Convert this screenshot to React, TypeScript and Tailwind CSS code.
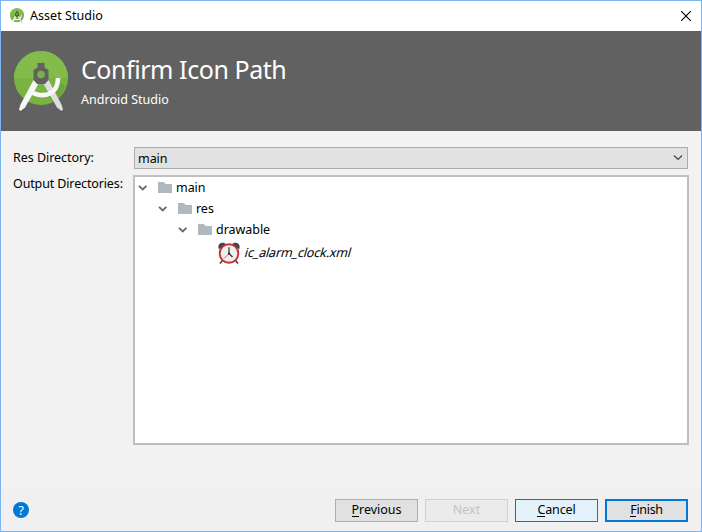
import type { ReactNode } from 'react';

function StudioLogo({ className, gear }: { className: string; gear: string }) {
  return (
    <svg viewBox="0 0 54 60" className={className}>
      <circle cx="27" cy="27" r="27" fill="#7ab342" />
      <path d="M0 27a27 27 0 0 1 54 0z" fill="#83bc4b" />
      <path d="M33 17 51 35.500A27 27 0 0 1 39 51L31 42 45 30z" fill="#639b36" opacity=".6" />
      <path d="M19.500 29 6.500 53.500 5 58.500 6.500 60 11 56.500 25 32z" fill="#f7f7f7" />
      <path d="M34.500 29 47.500 53.500 49 58.500 47.500 60 43 56.500 29 32z" fill="#dedede" />
      <path d="M16 40.500C31 48.500 44 42.500 44 27" fill="none" stroke="#f7f7f7" strokeWidth="4.600" />
      <path d="M23.500 12h7v4.500L34.500 19v10L31 33h-8l-3.500-4V19l4-2.500z" fill={gear} />
      <circle cx="27" cy="23.500" r="3.800" fill="#7ab342" />
    </svg>
  );
}

function Chevron() {
  return (
    <svg viewBox="0 0 10 6" className="h-[6px] w-[10px] shrink-0">
      <path d="M1 .8 4.700 4.500 8.400 .8" fill="none" stroke="#6b6b6b" strokeWidth="1.900" />
    </svg>
  );
}

function Folder() {
  return (
    <svg viewBox="0 0 14 11" className="ml-[10px] h-[11px] w-[14px] shrink-0">
      <path d="M0 0h5.500L8 2h6v9H0z" fill="#afb9bf" />
    </svg>
  );
}

function AlarmClock() {
  return (
    <svg viewBox="0 0 24 24" className="h-6 w-6 shrink-0">
      <path d="m5.500 19.500-2.500 3M18.500 19.500l2.500 3" stroke="#37474f" strokeWidth="1.600" />
      <path d="M1.800 8.200C.7 5.500 1.600 3 3.900 2.100 6 1.300 8 2 9 3.500zM22.200 8.200c1.100-2.700.2-5.200-2.100-6.100C18 1.300 16 2 15 3.500z" fill="#37474f" />
      <circle cx="12" cy="12.500" r="9.300" fill="#eceff1" stroke="#c93030" strokeWidth="1.900" />
      <path d="M12 6.300v6.200l3.500 3.500" fill="none" stroke="#222" strokeWidth="1.100" />
      <path d="m12 12.500-5 5" stroke="#d84343" strokeWidth=".8" />
      <circle cx="12" cy="12.500" r="1" fill="#111" />
    </svg>
  );
}

function FolderRow({ indent, label }: { indent: string; label: ReactNode }) {
  return (
    <div className={`flex h-[21px] items-center ${indent}`}>
      <Chevron />
      <Folder />
      <span className="ml-1">{label}</span>
    </div>
  );
}

function DialogButton({ look, children }: { look: string; children: ReactNode }) {
  return (
    <button className={`flex h-[23px] w-[83px] items-center justify-center ${look}`}>
      <span>{children}</span>
    </button>
  );
}

function Mnemonic({ children }: { children: string }) {
  return <span className="inline-block h-[14px] border-b border-black leading-[14px]">{children}</span>;
}

export default function App() {
  return (
    <div className="flex h-[532px] w-[702px] flex-col overflow-hidden border border-[#7ab4f2] bg-[#f2f2f2] font-['Noto_Sans',sans-serif] text-[12.500px] leading-4 tracking-[-0.040px] whitespace-nowrap text-black">
      <div className="flex h-[30px] shrink-0 items-center bg-white pr-[10px] pl-[9px]">
        <StudioLogo className="h-4 w-[14px]" gear="#555" />
        <span className="ml-[6px] tracking-[0.050px]">Asset Studio</span>
        <svg viewBox="0 0 10 10" className="ml-auto h-[10px] w-[10px]">
          <path d="m0 0 10 10M10 0 0 10" stroke="#000" strokeWidth="1.100" />
        </svg>
      </div>
      <div className="flex h-[100px] shrink-0 items-start bg-[#616161] pl-[13px] text-white">
        <StudioLogo className="mt-5 h-[60px] w-[54px]" gear="#616161" />
        <div className="ml-[13px] pt-[22px]">
          <h1 className="text-[25px] leading-8 font-normal tracking-[-0.440px]">Confirm Icon Path</h1>
          <p className="mt-[7px] tracking-[0.020px]">Android Studio</p>
        </div>
      </div>
      <div className="flex h-[358px] shrink-0 flex-col pt-4 pr-3 pl-3">
        <div className="flex h-[22px] items-center">
          <span className="w-[121px]">Res Directory:</span>
          <div className="mr-px flex h-[22px] flex-1 items-center border border-[#adadad] bg-[#e1e1e1] pr-1 pl-[3px]">
            <span className="pt-px">main</span>
            <svg viewBox="0 0 10 6" className="ml-auto h-[6px] w-[10px]">
              <path d="m1 .5 4 4 4-4" fill="none" stroke="#444" strokeWidth="1.200" />
            </svg>
          </div>
        </div>
        <div className="mt-[6px] flex h-[270px]">
          <span className="w-[120px] pt-px tracking-[-0.130px]">Output Directories:</span>
          <div className="flex-1 border-2 border-[#bfbfbf] bg-white">
            <FolderRow indent="pl-[3px]" label="main" />
            <FolderRow indent="pl-[23px]" label="res" />
            <FolderRow indent="pl-[43px]" label="drawable" />
            <div className="flex h-[25px] items-center pl-[82px]">
              <AlarmClock />
              <span className="ml-1 inline-block skew-x-[-16deg] tracking-[-0.150px]">ic_alarm_clock.xml</span>
            </div>
          </div>
        </div>
      </div>
      <div className="flex flex-1 items-center bg-[#f0f0f0] pr-[13px] pl-3">
        <span className="flex size-4 items-center justify-center rounded-full bg-[#0078d7] text-[13px] text-white">?</span>
        <div className="ml-auto flex gap-[7px]">
          <DialogButton look="border border-[#adadad] bg-[#e1e1e1]"><Mnemonic>P</Mnemonic>revious</DialogButton>
          <DialogButton look="border border-[#d0d0d0] bg-[#ebebeb] text-[#c3c3c3]">Next</DialogButton>
          <DialogButton look="border border-[#0078d7] bg-[#e3f1fa] tracking-[-0.150px]"><Mnemonic>C</Mnemonic>ancel</DialogButton>
          <DialogButton look="border-2 border-[#0078d7] bg-[#e1e1e1] tracking-[-0.300px]"><Mnemonic>F</Mnemonic>inish</DialogButton>
        </div>
      </div>
    </div>
  );
}
